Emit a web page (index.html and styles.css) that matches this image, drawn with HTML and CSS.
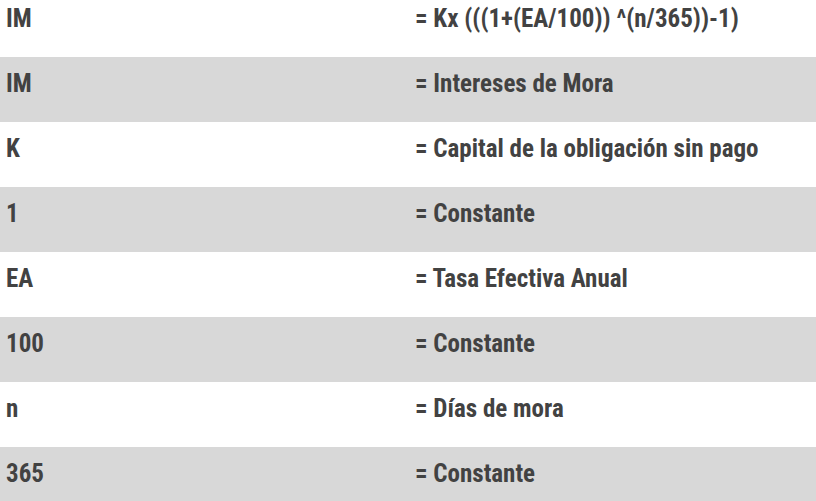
FILE: index.html
```html
<!DOCTYPE html>
<html lang="es">
<head>
<meta charset="utf-8">
<link rel="stylesheet" href="styles.css">
</head>
<body>
<div class="table">
  <div class="row"><div class="cell"><span class="t">IM</span></div><div class="cell"><span class="t">= Kx (((1+(EA/100)) ^(n/365))-1)</span></div></div>
  <div class="row alt"><div class="cell"><span class="t">IM</span></div><div class="cell"><span class="t">= Intereses de Mora</span></div></div>
  <div class="row"><div class="cell"><span class="t">K</span></div><div class="cell"><span class="t">= Capital de la obligación sin pago</span></div></div>
  <div class="row alt"><div class="cell"><span class="t">1</span></div><div class="cell"><span class="t">= Constante</span></div></div>
  <div class="row"><div class="cell"><span class="t">EA</span></div><div class="cell"><span class="t">= Tasa Efectiva Anual</span></div></div>
  <div class="row alt"><div class="cell"><span class="t">100</span></div><div class="cell"><span class="t">= Constante</span></div></div>
  <div class="row"><div class="cell"><span class="t">n</span></div><div class="cell"><span class="t">= Días de mora</span></div></div>
  <div class="row alt"><div class="cell"><span class="t">365</span></div><div class="cell"><span class="t">= Constante</span></div></div>
</div>
</body>
</html>
```

FILE: styles.css
```css
html, body {
  margin: 0;
  padding: 0;
  background: #ffffff;
  overflow: hidden;
}

.table {
  margin-top: -8px;
  font-family: Roboto, "Liberation Sans", sans-serif;
  font-weight: 700;
  font-size: 25px;
  line-height: 29px;
  color: #424242;
}

.row {
  display: grid;
  grid-template-columns: 409px 1fr;
  height: 65px;
  background: #ffffff;
}

.row.alt {
  background: #d8d8d8;
}

.cell {
  padding: 12px 6px 0 6px;
  white-space: nowrap;
}

.t {
  display: inline-block;
  font-stretch: condensed;
}
```
